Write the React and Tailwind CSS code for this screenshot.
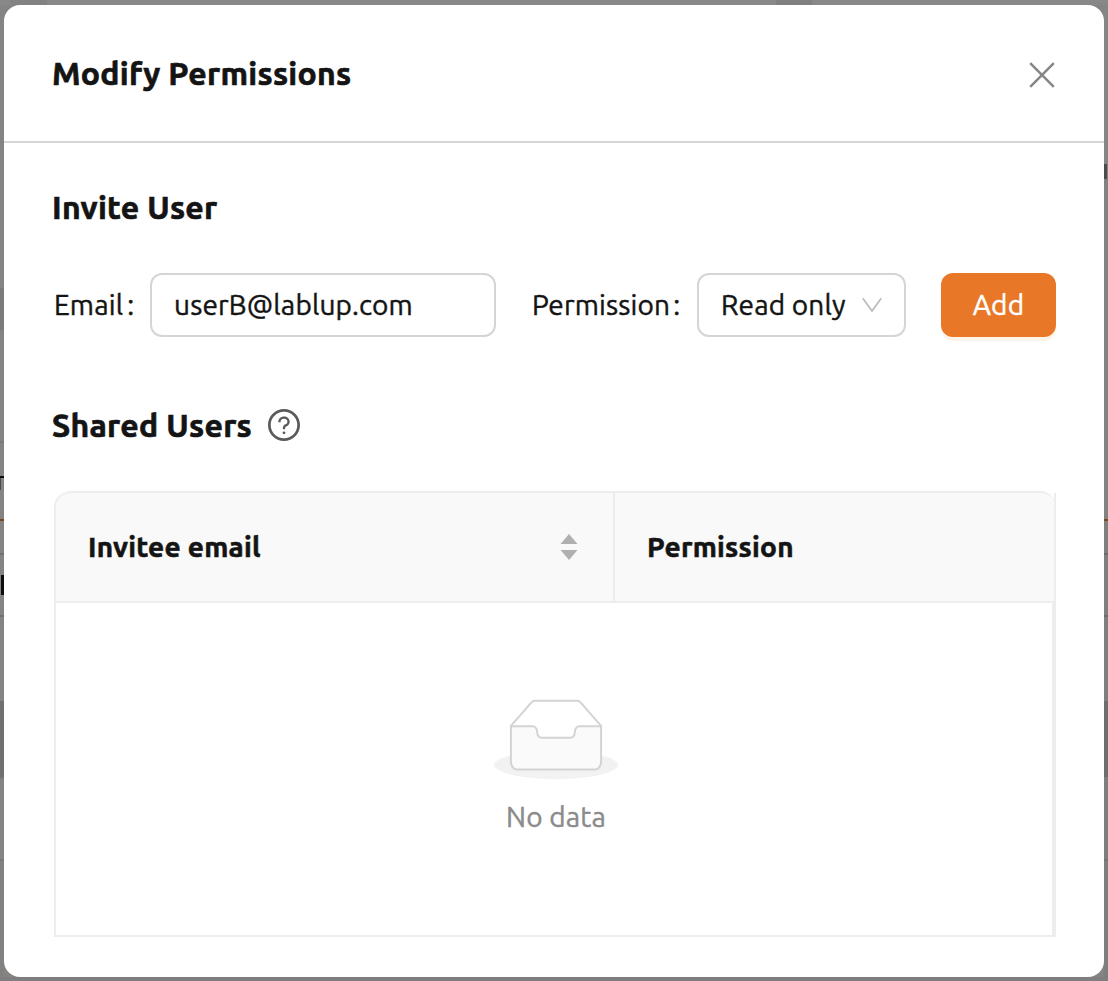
const leftEdge = [
  ['h-[283px]', 'bg-[#858483]'],
  ['h-[42px]', 'bg-[#7c7b7a]'],
  ['h-[111px]', 'bg-[#858483]'],
  ['h-[2px]', 'bg-[#7b7a79]'],
  ['h-[33px]', 'bg-[#858483]'],
  ['h-[2px]', 'bg-[#0c0c0c]'],
  ['h-[12px] w-px', 'bg-[#4b4a49]'],
  ['h-[29px]', 'bg-[#858483]'],
  ['h-[2px]', 'bg-[#81451b]'],
  ['h-[32px]', 'bg-[#858483]'],
  ['h-[2px]', 'bg-[#737271]'],
  ['h-[20px]', 'bg-[#858483]'],
  ['h-[20px] ml-px', 'bg-[#0c0c0c]'],
  ['h-[20px]', 'bg-[#858483]'],
  ['h-[2px]', 'bg-[#737271]'],
  ['h-[84px]', 'bg-[#858483]'],
  ['h-[76px]', 'bg-[#706f6d]'],
  ['h-[2px]', 'bg-[#7b7a78]'],
  ['h-[80px]', 'bg-[#858483]'],
  ['h-[2px]', 'bg-[#7a7977]'],
  ['h-[116px]', 'bg-[#828180]'],
];

const rightEdge = [
  ['h-[159px]', 'bg-[#858585]'],
  ['h-[15px] w-[3px]', 'bg-[#4b4b4b]'],
  ['h-[340px]', 'bg-[#828282]'],
  ['h-[2px]', 'bg-[#81451b]'],
  ['h-[32px]', 'bg-[#7f7f7f]'],
  ['h-[2px]', 'bg-[#6c6c6c]'],
  ['h-[60px]', 'bg-[#7f7f7f]'],
  ['h-[2px]', 'bg-[#6c6c6c]'],
  ['h-[84px]', 'bg-[#7f7f7f]'],
  ['h-[76px]', 'bg-[#6e6e6e]'],
  ['h-[82px]', 'bg-[#7e7e7e]'],
  ['h-[2px]', 'bg-[#747474]'],
  ['h-[116px]', 'bg-[#7e7e7e]'],
];

function Edge({ bands }) {
  return (
    <div className="flex w-1 shrink-0 flex-col bg-[#858483]">
      {bands.map(([size, color], i) => (
        <div key={i} className={`shrink-0 ${size} ${color}`} />
      ))}
    </div>
  );
}

function CloseIcon() {
  return (
    <svg className="h-[26px] w-[26px]" viewBox="0 0 26 26" fill="none" stroke="#868686" strokeWidth="2.5">
      <path d="M1.2 1.2 24.8 24.8M24.8 1.2 1.2 24.8" />
    </svg>
  );
}

function HelpIcon() {
  return (
    <svg className="h-8 w-8" viewBox="64 64 896 896" fill="#5a5a5a">
      <path d="M512 64C264.600 64 64 264.600 64 512s200.600 448 448 448 448-200.600 448-448S759.400 64 512 64zm0 820c-205.400 0-372-166.600-372-372s166.600-372 372-372 372 166.600 372 372-166.600 372-372 372z" />
      <path d="M623.600 316.700C593.600 290.400 554 276 512 276s-81.600 14.500-111.600 40.700C369.200 344 352 380.700 352 420v7.600c0 4.400 3.600 8 8 8h48c4.400 0 8-3.600 8-8V420c0-44.100 43.100-80 96-80s96 35.900 96 80c0 31.100-22 59.600-56.100 72.700-21.200 8.100-39.200 22.300-52.100 40.900-13.100 19-19.900 41.800-19.900 64.900V620c0 4.400 3.600 8 8 8h48c4.400 0 8-3.600 8-8v-22.700a48.300 48.300 0 0 1 30.900-44.800c59-22.700 97.100-74.700 97.100-132.500.1-39.300-17.100-76-48.300-103.300zM472 732a40 40 0 1 0 80 0 40 40 0 1 0-80 0z" />
    </svg>
  );
}

function EmptyIcon() {
  return (
    <svg className="h-[82px] w-32" viewBox="0 0 64 41">
      <g transform="translate(0 1)" fill="none" fillRule="evenodd">
        <ellipse fill="#f2f2f2" cx="32" cy="33" rx="31" ry="7" />
        <g fillRule="nonzero" stroke="#d3d3d3" transform="translate(0.64 0.9) scale(0.98)">
          <path fill="#fff" d="M55 12.760 44.854 1.258C44.367.474 43.656 0 42.907 0H21.093c-.749 0-1.460.474-1.947 1.257L9 12.761V22h46v-9.240z" />
          <path d="M41.613 15.931c0-1.605.994-2.930 2.227-2.931H55v18.137C55 33.260 53.680 35 52.050 35h-40.100C10.320 35 9 33.259 9 31.137V13h11.160c1.233 0 2.227 1.323 2.227 2.928v.022c0 1.605 1.005 2.901 2.237 2.901h14.752c1.232 0 2.237-1.308 2.237-2.913v-.007z" fill="#fafafa" />
        </g>
      </g>
    </svg>
  );
}

const heading = 'text-[32px] font-bold leading-10 tracking-[0.28px] [-webkit-text-stroke:0.7px_currentColor]';
const body = 'text-[28px] tracking-[0.15px] [-webkit-text-stroke:0.45px_currentColor]';

function Header() {
  return (
    <header className="flex h-[138px] shrink-0 items-center justify-between border-b-2 border-[#d5d5d5] pl-12 pr-[49px] pt-1">
      <h1 className={`mb-1 ${heading}`}>Modify Permissions</h1>
      <button aria-label="Close"><CloseIcon /></button>
    </header>
  );
}

function InviteForm() {
  return (
    <form className={`mt-[46px] flex h-16 items-center ${body}`}>
      <label className="w-[98px] shrink-0 whitespace-nowrap pl-[2px]">Email<span className="ml-1">:</span></label>
      <div className="flex h-16 w-[346px] shrink-0 items-center rounded-xl border-2 border-[#d5d5d5] px-[22px]">
        <span>userB@lablup.com</span>
      </div>
      <label className="ml-9 w-[165px] shrink-0 whitespace-nowrap">Permission<span className="ml-[3px]">:</span></label>
      <div className="flex h-16 w-[209px] shrink-0 items-center justify-between rounded-xl border-2 border-[#d5d5d5] pl-[22px] pr-[22px]">
        <span className="whitespace-nowrap">Read only</span>
        <svg className="h-4 w-5 shrink-0" viewBox="0 0 20 16" fill="none" stroke="#bdbdbd" strokeWidth="1.800"><path d="M.8 1.200 10 14 19.200 1.200" /></svg>
      </div>
      <button type="button" className="ml-[35px] h-16 w-[115px] shrink-0 rounded-xl bg-[#e87728] text-white shadow-[0_4px_0_#fff4e8]">Add</button>
    </form>
  );
}

function SharedTable() {
  return (
    <section className="ml-[2px] mt-[46px] flex h-[446px] w-[1002px] flex-col rounded-tl-2xl border-b-2 border-l-2 border-[#ededed]">
      <div className="flex h-[112px] shrink-0 rounded-t-2xl border-y-2 border-[#ededed] bg-[#f9f9f9] text-[28px] font-bold tracking-[0.25px] [-webkit-text-stroke:0.6px_currentColor]">
        <div className="flex w-[559px] items-center justify-between border-r-2 border-[#ededed] pl-8 pr-[35px]">
          <span>Invitee email</span>
          <svg className="h-[26px] w-[18px]" viewBox="0 0 18 26" fill="#b0b0b0"><path d="M9 0 17.500 10H.5ZM9 26 17.500 16H.5Z" /></svg>
        </div>
        <div className="flex flex-1 items-center border-r-2 border-[#ededed] pl-8"><span>Permission</span></div>
      </div>
      <div className={`flex flex-1 flex-col items-center border-r-4 border-[#ededed] pl-[4px] pt-[94px] text-[#8b8b8b] ${body}`}>
        <EmptyIcon />
        <p className="mt-4 leading-[44px]">No data</p>
      </div>
    </section>
  );
}

export default function App() {
  return (
    <div className="flex h-[981px] w-[1108px] flex-col overflow-hidden bg-[#858483] font-['Ubuntu','Noto_Sans',sans-serif] text-[#141414]">
      <div className="flex h-[5px] shrink-0 bg-[#888]">
        <div className="ml-[11px] w-9 bg-[#828282]" />
        <div className="ml-[729px] w-9 bg-[#808080]" />
      </div>
      <div className="flex h-[972px] shrink-0">
        <Edge bands={leftEdge} />
        <main className="flex w-[1100px] shrink-0 flex-col rounded-2xl bg-white">
          <Header />
          <div className="px-12 pt-11">
            <h2 className={heading}>Invite User</h2>
            <InviteForm />
            <div className="mt-[68px] flex h-10 items-center gap-4">
              <h2 className={heading}>Shared Users</h2>
              <HelpIcon />
            </div>
            <SharedTable />
          </div>
        </main>
        <Edge bands={rightEdge} />
      </div>
      <div className="h-1 shrink-0 bg-[#7e7e7e]" />
    </div>
  );
}
